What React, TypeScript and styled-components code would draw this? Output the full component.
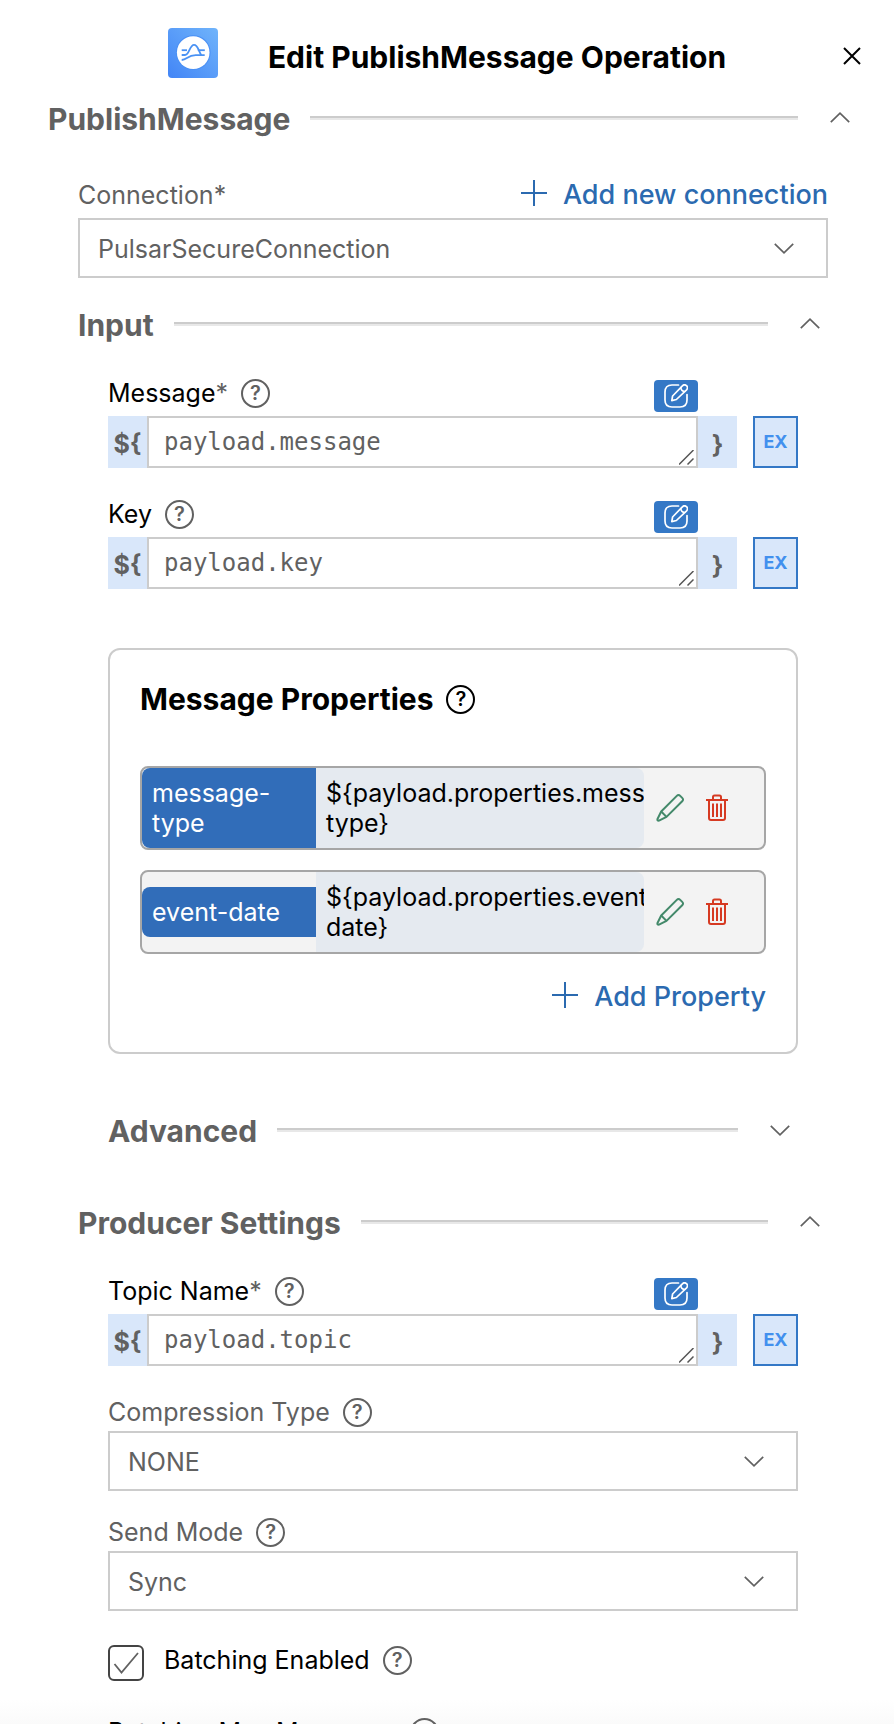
import React, { useId, useState } from "react";
import styled, { createGlobalStyle } from "styled-components";

const GlobalStyle = createGlobalStyle`
  *, *::before, *::after { box-sizing: border-box; }
  body {
    margin: 0;
    background: #fff;
    color: #000;
    font-family: Inter, "Liberation Sans", sans-serif;
    font-size: 25px;
    line-height: 30px;
  }
  button, select, textarea, input { font: inherit; color: inherit; margin: 0; }
  button { padding: 0; border: 0; background: none; cursor: pointer; }
  h1, h2, h3 { margin: 0; }
`;

const grey = "#616161";
const line = "#cccccc";
const blue = "#3478c6";
const linkBlue = "#2b6ab0";
const paleBlue = "#d9e7fa";

const Dialog = styled.main`
  display: flex;
  flex-direction: column;
  height: 100vh;
  background: linear-gradient(to top, #fafafa, #fff 24px);
`;

const Header = styled.header`
  flex: none;
  display: grid;
  grid-template-columns: 1fr auto 1fr;
  align-items: start;
  padding: 28px 32px 0;
`;

const Brand = styled.div`
  grid-column: 2;
  display: flex;
  gap: 50px;
`;

const Title = styled.h1`
  font-size: 30px;
  font-weight: 700;
  line-height: 58px;
`;

const CloseButton = styled.button`
  justify-self: end;
  display: grid;
  place-items: center;
  width: 20px;
  height: 56px;
`;

const Body = styled.div`
  flex: 1;
  overflow-y: auto;
  scrollbar-width: none;
  padding: 12px 36px 40px 48px;
`;

const SectionHead = styled.div`
  display: flex;
  align-items: center;
  height: 40px;
`;

const SectionTitle = styled.h2`
  padding-top: 2px;
  font-size: 30px;
  font-weight: 700;
  line-height: 38px;
  color: ${grey};
`;

const Rule = styled.hr`
  flex: 1;
  height: 4px;
  margin: 0 24px 0 20px;
  border: 0;
  border-top: 2px solid ${line};
  background: #e8e8e8;
`;

const ToggleButton = styled.button`
  display: grid;
  place-items: center;
  width: 36px;
  height: 36px;
`;

const Group = styled.section<{ $top?: number }>`
  margin-top: ${(p) => p.$top ?? 0}px;
  padding: 0 30px;
`;

const Fields = styled.div<{ $top: number; $gap: number }>`
  display: flex;
  flex-direction: column;
  gap: ${(p) => p.$gap}px;
  margin-top: ${(p) => p.$top}px;
`;

const Indent = styled.div`
  padding: 0 30px;
`;

const LabelRow = styled.div<{ $trail?: number }>`
  display: flex;
  align-items: center;
  gap: 13px;
  height: 38px;
  margin-right: ${(p) => p.$trail ?? 0}px;
`;

const Label = styled.label<{ $muted?: boolean }>`
  color: ${(p) => (p.$muted ? grey : "#000")};
`;

const Star = styled.span`
  color: ${grey};
`;

const Help = styled.button<{ $dark?: boolean }>`
  width: 29px;
  height: 29px;
  border: 2px solid currentColor;
  border-radius: 50%;
  color: ${(p) => (p.$dark ? "#000" : grey)};
  font-size: 20px;
  font-weight: 600;
  line-height: 25px;
  text-align: center;
`;

const LinkButton = styled.button`
  display: flex;
  align-items: center;
  gap: 16px;
  margin-left: auto;
  color: ${linkBlue};
  font-size: 27px;
  font-weight: 500;
  line-height: 38px;
`;

const SelectBox = styled.div`
  position: relative;
`;

const Select = styled.select`
  display: block;
  width: 100%;
  height: 60px;
  padding: 2px 64px 0 18px;
  appearance: none;
  border: 2px solid ${line};
  border-radius: 0;
  background: #fff;
  color: ${grey};
`;

const SelectArrow = styled.span`
  position: absolute;
  top: 0;
  right: 34px;
  height: 100%;
  display: flex;
  align-items: center;
  pointer-events: none;
`;

const EditButton = styled.button`
  display: grid;
  place-items: center;
  align-self: flex-end;
  width: 44px;
  height: 32px;
  margin-left: auto;
  border-radius: 4px;
  background: ${blue};
`;

const ExpressionRow = styled.div`
  display: flex;
  height: 52px;
  margin-top: 4px;
`;

const Brace = styled.span`
  width: 39px;
  height: 52px;
  background: ${paleBlue};
  color: ${grey};
  font-size: 25px;
  font-weight: 700;
  line-height: 56px;
  text-align: center;
`;

const AreaBox = styled.div`
  position: relative;
  flex: 1;
  min-width: 0;
`;

const Area = styled.textarea`
  display: block;
  width: 100%;
  height: 52px;
  padding: 9px 15px;
  border: 2px solid ${line};
  border-radius: 0;
  resize: none;
  overflow: hidden;
  background: #fff;
  color: ${grey};
  font-family: "DejaVu Sans Mono", monospace;
  font-size: 24px;
  line-height: 30px;
`;

const Grip = styled.svg`
  position: absolute;
  right: 4px;
  bottom: 3px;
  pointer-events: none;
`;

const ExampleButton = styled.button`
  width: 45px;
  height: 52px;
  margin-left: 16px;
  border: 2px solid ${blue};
  background: ${paleBlue};
  color: #4290ee;
  font-size: 18px;
  font-weight: 700;
`;

const Card = styled.section`
  margin-top: 59px;
  padding: 30px 30px 36px;
  border: 2px solid ${line};
  border-radius: 12px;
`;

const CardTitle = styled.h3`
  font-size: 30px;
  font-weight: 700;
  line-height: 38px;
`;

const PropertyList = styled.ul`
  display: flex;
  flex-direction: column;
  gap: 20px;
  margin: 48px 0 24px;
  padding: 0;
  list-style: none;
`;

const PropertyRow = styled.li`
  display: flex;
  align-items: center;
  border: 2px solid #a6a6a6;
  border-radius: 8px;
  background: #f3f3f3;
`;

const PropertyKey = styled.span`
  flex: none;
  width: 174px;
  padding: 10px;
  border-radius: 8px 0 0 8px;
  background: #316db9;
  color: #fff;
`;

const PropertyValue = styled.span`
  flex: 1;
  min-width: 0;
  padding: 10px;
  overflow: hidden;
  border-radius: 0 8px 8px 0;
  background: #e5eaf0;
`;

const PropertyActions = styled.span`
  flex: none;
  display: flex;
  align-items: center;
  gap: 22px;
  padding: 0 36px 0 12px;
`;

const IconButton = styled.button`
  display: grid;
  place-items: center;
`;

const CheckRow = styled.div`
  display: flex;
  align-items: flex-start;
  margin: 12px 0 10px;
`;

const CheckBox = styled.input`
  width: 36px;
  height: 36px;
  margin-right: 20px;
  appearance: none;
  border: 2px solid #444;
  border-radius: 6px;
  background: #fff;
`;

const CheckFrame = styled.span`
  position: relative;
  display: flex;
`;

const CheckMark = styled.svg`
  position: absolute;
  left: 5px;
  top: 6px;
  pointer-events: none;
`;

const CheckLabel = styled.div`
  display: flex;
  align-items: center;
  gap: 13px;
`;

const Logo = () => (
  <svg width="50" height="50" viewBox="0 0 50 50" aria-hidden="true">
    <defs>
      <linearGradient id="logo-fill" x1="0" y1="1" x2="1" y2="0">
        <stop offset="0" stopColor="#4285f6" />
        <stop offset="1" stopColor="#70b4fb" />
      </linearGradient>
    </defs>
    <rect width="50" height="50" rx="4" fill="url(#logo-fill)" />
    <circle cx="25.2" cy="24.6" r="17.4" fill="#4a90f5" />
    <circle cx="25.2" cy="24.6" r="16.3" fill="#fff" />
    <g fill="none" stroke="#4a92f4" strokeWidth="1.8">
      <path d="M13.700 22.200h5.300" />
      <path d="M13.700 27h3.300c4.500 0 4.500-10.200 9-10.200 4.300 0 4.200 6.200 7.400 10.400" />
      <path d="M29.800 22.200h7" />
      <path d="M13.700 32c5.300 0 5.600-4.800 14-4.800h9" />
    </g>
  </svg>
);

const Chevron = ({ up }: { up?: boolean }) => (
  <svg width="20" height="12" viewBox="0 0 20 12" fill="none" stroke={grey} strokeWidth="1.7" aria-hidden="true">
    <path d={up ? "M.8 10.200 10 1.200l9.200 9" : "M.8 1.800 10 10.800l9.200-9"} />
  </svg>
);

const Plus = () => (
  <svg width="26" height="30" viewBox="0 0 26 30" stroke={linkBlue} strokeWidth="2" aria-hidden="true">
    <path d="M13 0v26M0 13h26" />
  </svg>
);

const Compose = () => (
  <svg width="24" height="24" viewBox="0 0 24 24" fill="none" stroke="#fff" strokeWidth="1.7" strokeLinecap="round" strokeLinejoin="round" aria-hidden="true">
    <path d="M14.500 1H8Q1 1 1 8v8q0 7 7 7h8q7 0 7-7v-5.500" />
    <path d="m7.800 16.600.8-4.600L18.400 1.800a2.900 2.900 0 0 1 4.200 4L12.400 15.500Z" />
    <path d="M16.800 3.600a4 4 0 0 0 3.900 3.900" />
  </svg>
);

const Pencil = () => (
  <svg width="28" height="28" viewBox="0 0 28 28" fill="none" stroke="#43896a" strokeWidth="2" strokeLinejoin="round" aria-hidden="true">
    <path d="M1.500 25 5.200 17.500 20.800 1.900q1.700-1.700 3.400 0l2 2q1.700 1.700 0 3.400L10.500 22.900 3 26.600q-2 .4-1.500-1.600Z" />
    <path d="M5.200 17.500 10.500 22.900" />
  </svg>
);

const Trash = () => (
  <svg width="22" height="28" viewBox="0 0 22 28" fill="none" stroke="#d63a22" strokeWidth="2" aria-hidden="true">
    <path d="M0 6h22M7 6V3q0-1.500 1.500-1.500h5Q15 1.500 15 3v3M3 6v18q0 2 2 2h12q2 0 2-2V6M7 9.500v13.500M11 9.500v13.500M15 9.500v13.500" />
  </svg>
);

const HelpButton = ({ about, dark }: { about: string; dark?: boolean }) => (
  <Help type="button" $dark={dark} aria-label={`Help: ${about}`}>?</Help>
);

const SectionHeader = ({ title, open = true }: { title: string; open?: boolean }) => (
  <SectionHead>
    <SectionTitle>{title}</SectionTitle>
    <Rule />
    <ToggleButton type="button" aria-expanded={open} aria-label={`Toggle ${title}`}>
      <Chevron up={open} />
    </ToggleButton>
  </SectionHead>
);

const SelectControl = ({ id, value }: { id: string; value: string }) => (
  <SelectBox>
    <Select id={id} defaultValue={value}>
      <option>{value}</option>
    </Select>
    <SelectArrow><Chevron /></SelectArrow>
  </SelectBox>
);

const SelectField = ({ label, value }: { label: string; value: string }) => {
  const id = useId();
  return (
    <div>
      <LabelRow>
        <Label htmlFor={id} $muted>{label}</Label>
        <HelpButton about={label} />
      </LabelRow>
      <SelectControl id={id} value={value} />
    </div>
  );
};

const ExpressionField = ({ label, value, required }: { label: string; value: string; required?: boolean }) => {
  const id = useId();
  return (
    <div>
      <LabelRow $trail={100}>
        <Label htmlFor={id}>{label}{required && <Star>*</Star>}</Label>
        <HelpButton about={label} />
        <EditButton type="button" aria-label={`Edit ${label}`}><Compose /></EditButton>
      </LabelRow>
      <ExpressionRow>
        <Brace>{"${"}</Brace>
        <AreaBox>
          <Area id={id} rows={1} defaultValue={value} spellCheck={false} />
          <Grip width="15" height="15" viewBox="0 0 15 15" stroke="#555" strokeWidth="1.500" aria-hidden="true">
            <path d="M0 14.500 14.500 0M8.500 14.500l6-6" />
          </Grip>
        </AreaBox>
        <Brace>{"}"}</Brace>
        <ExampleButton type="button">EX</ExampleButton>
      </ExpressionRow>
    </div>
  );
};

const BatchSizeField = () => (
  <LabelRow>
    <Label as="span">Batching Max Messages</Label>
    <HelpButton about="Batching Max Messages" />
  </LabelRow>
);

const properties = [
  { name: "message-type", value: "${payload.properties.message-type}" },
  { name: "event-date", value: "${payload.properties.event-date}" },
];

export default function App() {
  const [batching, setBatching] = useState(true);
  return (
    <>
      <GlobalStyle />
      <Dialog>
        <Header>
          <Brand>
            <Logo />
            <Title>Edit PublishMessage Operation</Title>
          </Brand>
          <CloseButton type="button" aria-label="Close">
            <svg width="18" height="18" viewBox="0 0 18 18" stroke="#000" strokeWidth="2" aria-hidden="true">
              <path d="m1 1 16 16M17 1 1 17" />
            </svg>
          </CloseButton>
        </Header>
        <Body>
          <SectionHeader title="PublishMessage" />
          <Group $top={38}>
            <LabelRow>
              <Label htmlFor="connection" $muted>Connection*</Label>
              <LinkButton type="button"><Plus />Add new connection</LinkButton>
            </LabelRow>
            <Fields $top={4} $gap={0}>
              <SelectControl id="connection" value="PulsarSecureConnection" />
            </Fields>
          </Group>

          <Group $top={26}>
            <SectionHeader title="Input" />
            <Indent>
              <Fields $top={30} $gap={27}>
                <ExpressionField label="Message" value="payload.message" required />
                <ExpressionField label="Key" value="payload.key" />
              </Fields>
              <Card>
                <LabelRow>
                  <CardTitle>Message Properties</CardTitle>
                  <HelpButton about="Message Properties" dark />
                </LabelRow>
                <PropertyList>
                  {properties.map((p) => (
                    <PropertyRow key={p.name}>
                      <PropertyKey>{p.name}</PropertyKey>
                      <PropertyValue>{p.value}</PropertyValue>
                      <PropertyActions>
                        <IconButton type="button" aria-label={`Edit ${p.name}`}><Pencil /></IconButton>
                        <IconButton type="button" aria-label={`Delete ${p.name}`}><Trash /></IconButton>
                      </PropertyActions>
                    </PropertyRow>
                  ))}
                </PropertyList>
                <LinkButton type="button"><Plus />Add Property</LinkButton>
              </Card>
              <Fields $top={56} $gap={0}>
                <SectionHeader title="Advanced" open={false} />
              </Fields>
            </Indent>
          </Group>

          <Group $top={52}>
            <SectionHeader title="Producer Settings" />
            <Indent>
              <Fields $top={30} $gap={27}>
                <ExpressionField label="Topic Name" value="payload.topic" required />
                <Fields $top={0} $gap={22}>
                  <SelectField label="Compression Type" value="NONE" />
                  <SelectField label="Send Mode" value="Sync" />
                  <CheckRow>
                    <CheckFrame>
                      <CheckBox
                        id="batching"
                        type="checkbox"
                        checked={batching}
                        onChange={(e) => setBatching(e.target.checked)}
                      />
                      {batching && (
                        <CheckMark width="26" height="24" viewBox="0 0 26 24" fill="none" stroke={grey} strokeWidth="1.800" aria-hidden="true">
                          <path d="m1.500 13 7 8.500L25 2" />
                        </CheckMark>
                      )}
                    </CheckFrame>
                    <CheckLabel>
                      <Label htmlFor="batching">Batching Enabled</Label>
                      <HelpButton about="Batching Enabled" />
                    </CheckLabel>
                  </CheckRow>
                  <BatchSizeField />
                </Fields>
              </Fields>
            </Indent>
          </Group>
        </Body>
      </Dialog>
    </>
  );
}
